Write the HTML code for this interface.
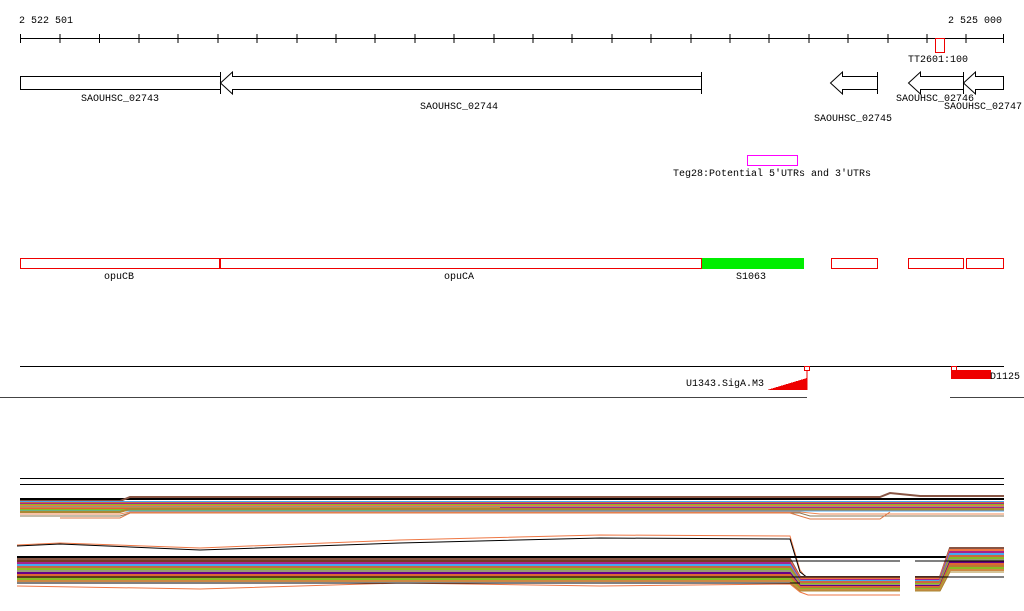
<!DOCTYPE html><html><head><style>body{margin:0;background:#fff}svg{display:block}text{font-family:"Liberation Mono",monospace;font-size:10px;fill:#000}</style></head><body>
<svg width="1024" height="611" xmlns="http://www.w3.org/2000/svg" shape-rendering="crispEdges">
<text x="19" y="23">2 522 501</text><text x="948" y="23">2 525 000</text>
<line x1="20" y1="38.5" x2="1004" y2="38.5" stroke="#000"/>
<g stroke="#000">
<path d="M20.5 34V43M60 34V43M99.5 34V43M139 34V43M178 34V43M218 34V43M257 34V43M297 34V43M336 34V43M375 34V43M415 34V43M454 34V43M494 34V43M533 34V43M572 34V43M612 34V43M651 34V43M691 34V43M730 34V43M769 34V43M809 34V43M848 34V43M888 34V43M927 34V43M966 34V43M1003.5 34V43"/>
</g>
<rect x="935.5" y="38.5" width="9" height="14" fill="none" stroke="#e00"/>
<text x="908" y="62">TT2601:100</text>
<g fill="#fff" stroke="#000" shape-rendering="auto">
<rect x="20.5" y="76.5" width="200" height="13"/>
<path d="M232.5 76.5H701.5V89.5H232.5V94L220.5 83L232.5 72Z"/><line x1="220.5" y1="72" x2="220.5" y2="94"/><line x1="701.5" y1="72" x2="701.5" y2="94"/>
<path d="M842.5 76.5H877.5V89.5H842.5V94L830.5 83L842.5 72Z"/><line x1="877.5" y1="72" x2="877.5" y2="94"/>
<path d="M920.5 76.5H963.5V89.5H920.5V94L908.5 83L920.5 72Z"/>
<path d="M975.5 76.5H1003.5V89.5H975.5V94L963.5 83L975.5 72Z"/><line x1="963.5" y1="72" x2="963.5" y2="94"/>
</g>
<text x="81" y="101">SAOUHSC_02743</text><text x="420" y="109">SAOUHSC_02744</text><text x="814" y="121">SAOUHSC_02745</text><text x="896" y="101">SAOUHSC_02746</text><text x="944" y="109">SAOUHSC_02747</text>
<rect x="747.5" y="155.5" width="50" height="10" fill="none" stroke="#f0f"/>
<text x="673" y="176">Teg28:Potential 5'UTRs and 3'UTRs</text>
<g fill="none" stroke="#e00"><rect x="20.5" y="258.5" width="199" height="10"/><rect x="220.5" y="258.5" width="481" height="10"/><rect x="831.5" y="258.5" width="46" height="10"/><rect x="908.5" y="258.5" width="55" height="10"/><rect x="966.5" y="258.5" width="37" height="10"/></g>
<rect x="702" y="258" width="102" height="11" fill="#0e0"/>
<text x="104" y="279">opuCB</text><text x="444" y="279">opuCA</text><text x="736" y="279">S1063</text>
<line x1="20" y1="366.5" x2="1004" y2="366.5" stroke="#000"/>
<rect x="804.5" y="366.5" width="5" height="4" fill="none" stroke="#e00"/><rect x="951.5" y="366.5" width="5" height="4" fill="none" stroke="#e00"/>
<line x1="807" y1="370" x2="807" y2="390" stroke="#e00"/>
<path d="M767 390L807 378V390Z" fill="#e00"/>
<rect x="951" y="370" width="40" height="9" fill="#e00"/>
<text x="686" y="386">U1343.SigA.M3</text><text x="990" y="379">D1125</text>
<line x1="0" y1="397.5" x2="807" y2="397.5" stroke="#444"/><line x1="950" y1="397.5" x2="1024" y2="397.5" stroke="#444"/>
<line x1="20" y1="478.5" x2="1004" y2="478.5" stroke="#000"/><line x1="20" y1="484.5" x2="1004" y2="484.5" stroke="#000"/>
<g fill="none" stroke-width="2" shape-rendering="auto">
<path d="M20 499H1004" stroke="#000"/>
<path d="M20 501H120L130 497H880L890 493L920 496H1004" stroke="#854"/>
<path d="M20 502H1004" stroke="#4ae"/>
<path d="M20 503H300H1004" stroke="#c64"/>
<path d="M20 504H1004" stroke="#a28"/>
<path d="M20 505H1004" stroke="#8b2"/>
<path d="M20 506H1004" stroke="#e74"/>
<path d="M20 507H1004" stroke="#997"/>
<path d="M20 508H500" stroke="#c84"/>
<path d="M500 508H1004" stroke="#a28"/>
<path d="M20 509H1004" stroke="#d63"/>
<path d="M20 510H400" stroke="#8b2"/><path d="M400 510H1004" stroke="#b73"/>
<path d="M20 511H1004" stroke="#4ae" stroke-width="1"/>
<path d="M20 512H120L130 509H1004" stroke="#a83"/>
<path d="M20 514H120L130 512H800L820 514H1004" stroke="#e85" stroke-width="1"/>
<path d="M20 516H120L130 513H800L810 516H1004" stroke="#875" stroke-width="1"/>
<path d="M60 518H120L130 513H790L810 519H880L890 512" stroke="#d74" stroke-width="1"/>
</g>
<g fill="none" stroke-width="2" shape-rendering="auto">
<path d="M17 545L60 543L200 548L400 540L600 535L790 536L800 570L808 580H900" stroke="#e74" stroke-width="1"/>
<path d="M17 546L60 544L200 550L400 543L600 538L790 539L800 572L808 578H900" stroke="#000" stroke-width="1"/>
<path d="M17 557H1004" stroke="#000"/>
<path d="M17 559H790L800 577H900M915 577H940L950 548H1004" stroke="#854"/>
<path d="M17 561H790L800 578H900M915 578H940L950 550H1004" stroke="#e74"/>
<path d="M17 563H790L800 580H900M915 580H940L950 552H1004" stroke="#a28"/>
<path d="M17 565H790L800 581H900M915 581H940L950 554H1004" stroke="#4ae"/>
<path d="M17 567H790L800 582H900M915 582H940L950 556H1004" stroke="#c64"/>
<path d="M17 569H790L800 584H900M915 584H940L950 558H1004" stroke="#8b2"/>
<path d="M17 571H790L800 585H900M915 585H940L950 560H1004" stroke="#997"/>
<path d="M17 573H790L800 586H900M915 586H940L950 562H1004" stroke="#608"/>
<path d="M17 575H790L800 587H900M915 587H940L950 564H1004" stroke="#d63"/>
<path d="M17 577H790L800 588H900M915 588H940L950 566H1004" stroke="#b73"/>
<path d="M17 579H790L800 589H900M915 589H940L950 568H1004" stroke="#8b2"/>
<path d="M17 581H790L800 590H900M915 590H940L950 570H1004" stroke="#c84"/>
<path d="M17 583H790L800 591H900M915 591H940L950 572H1004" stroke="#a83" stroke-width="1"/>
<path d="M17 586L200 589L400 583L600 586L790 584L800 592L808 595H900" stroke="#e74" stroke-width="1"/>
<path d="M17 561H900M915 561H1004" stroke="#000" stroke-width="1"/>
<path d="M17 577H900M915 577H1004" stroke="#000" stroke-width="1"/>
<path d="M17 583H800" stroke="#000" stroke-width="1"/>
</g>
</svg></body></html>
